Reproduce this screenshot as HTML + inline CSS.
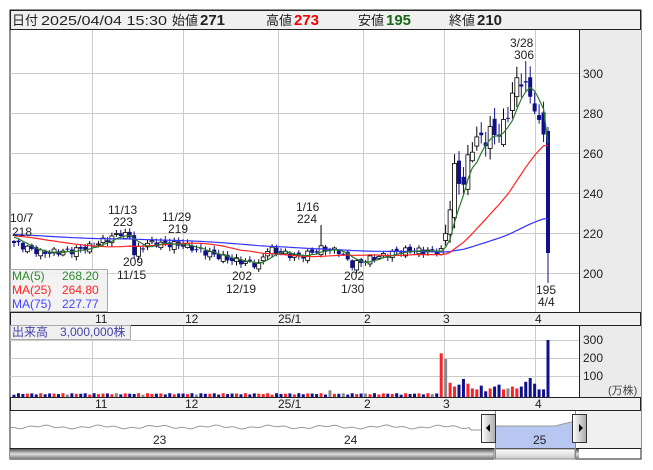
<!DOCTYPE html>
<html><head><meta charset="utf-8"><style>
html,body{margin:0;padding:0;background:#fff;width:653px;height:470px;overflow:hidden}
svg{display:block}
text{font-family:"Liberation Sans","Noto Sans CJK JP",sans-serif;font-size:12px;fill:#222}
.b{font-weight:bold;font-size:15px}
.h{font-size:13px}
</style></head><body>
<svg id="s" width="653" height="470" viewBox="0 0 653 470" xmlns="http://www.w3.org/2000/svg">
<defs>
<linearGradient id="sg" x1="0" y1="0" x2="0" y2="1"><stop offset="0" stop-color="#555"/><stop offset="0.5" stop-color="#ddd"/><stop offset="1" stop-color="#777"/></linearGradient>
<linearGradient id="tg" x1="0" y1="0" x2="0" y2="1"><stop offset="0" stop-color="#fff"/><stop offset="1" stop-color="#ccc"/></linearGradient>
<linearGradient id="hg" x1="0" y1="0" x2="1" y2="0"><stop offset="0" stop-color="#fff"/><stop offset="1" stop-color="#aaa"/></linearGradient>
</defs>
<rect x="10" y="10" width="631" height="449" fill="#fff" stroke="#222"/>
<rect x="10.5" y="10.5" width="630" height="19" fill="#f0f0f0" stroke="#222"/>
<text x="12" y="25" class="h">日付</text>
<text x="41" y="25" class="h" textLength="126" lengthAdjust="spacingAndGlyphs">2025/04/04 15:30</text>
<text x="172" y="25" class="h">始値</text>
<text x="200" y="25" class="b">271</text>
<text x="266" y="25" class="h">高値</text><text x="294" y="25" class="b" style="fill:#e00">273</text>
<text x="358" y="25" class="h">安値</text><text x="386" y="25" class="b" style="fill:#186818">195</text>
<text x="449" y="25" class="h">終値</text><text x="477" y="25" class="b">210</text>
<rect x="579" y="30" width="62" height="282" fill="#ebebeb"/>
<line x1="579.5" y1="30" x2="579.5" y2="312" stroke="#222"/>
<rect x="10.5" y="312.5" width="630" height="13" fill="#f0f0f0" stroke="#222"/>
<rect x="579" y="326" width="62" height="71" fill="#ebebeb"/>
<line x1="579.5" y1="326" x2="579.5" y2="397" stroke="#222"/>
<rect x="10.5" y="397.5" width="630" height="13" fill="#f0f0f0" stroke="#222"/>
<rect x="579" y="411" width="62" height="37" fill="#f0f0f0"/>
<line x1="10" y1="448.5" x2="641" y2="448.5" stroke="#222"/>
<rect x="10" y="449" width="569" height="10" fill="url(#sg)"/>
<rect x="494" y="449" width="81" height="10" fill="url(#tg)" stroke="#888"/>
<g id="grid"></g>
<g id="plot"></g>
<g fill="#222">
<text x="583" y="78">300</text><text x="583" y="118">280</text><text x="583" y="158">260</text><text x="583" y="198">240</text><text x="583" y="238">220</text><text x="583" y="278">200</text>
<text x="583" y="344">300</text><text x="583" y="362">200</text><text x="583" y="380">100</text>
<text x="608" y="394" style="font-size:11px;fill:#444">(万株)</text>
</g>
<g style="font-size:11px">
<text x="95" y="323">11</text><text x="185" y="323">12</text><text x="278" y="323">25/1</text><text x="364" y="323">2</text><text x="443" y="323">3</text><text x="535" y="323">4</text>
<text x="95" y="408">11</text><text x="185" y="408">12</text><text x="278" y="408">25/1</text><text x="364" y="408">2</text><text x="443" y="408">3</text><text x="535" y="408">4</text>
<text x="153" y="444">23</text><text x="344" y="444">24</text><text x="533" y="444">25</text>
</g>
<text x="10" y="222">10/7</text><text x="12" y="236">218</text>
<text x="108" y="214">11/13</text><text x="113" y="226">223</text>
<text x="162" y="221">11/29</text><text x="168" y="233">219</text>
<text x="296" y="211">1/16</text><text x="297" y="223">224</text>
<text x="123" y="266">209</text><text x="117" y="279">11/15</text>
<text x="232" y="280">202</text><text x="226" y="293">12/19</text>
<text x="344" y="280">202</text><text x="341" y="293">1/30</text>
<text x="510" y="47">3/28</text><text x="514" y="59">306</text>
<text x="536" y="294">195</text><text x="538" y="306">4/4</text>
<rect x="10.5" y="269.5" width="97" height="42" fill="#f0f0f0" fill-opacity="0.85" stroke="#aaa"/>
<text x="12" y="280" style="fill:#2e8b2e">MA(5)</text><text x="62" y="280" style="fill:#2e8b2e">268.20</text>
<text x="12" y="294" style="fill:#f22">MA(25)</text><text x="62" y="294" style="fill:#f22">264.80</text>
<text x="12" y="308" style="fill:#44f">MA(75)</text><text x="62" y="308" style="fill:#44f">227.77</text>
<rect x="10.5" y="325.5" width="120" height="14" fill="#f0f0f0" stroke="#aaa"/>
<text x="12" y="336" style="fill:#44a">出来高　3,000,000株</text>
</svg>
<script>
var NS="http://www.w3.org/2000/svg",grid=document.getElementById('grid'),plot=document.getElementById('plot');
function el(p,t,a){var e=document.createElementNS(NS,t);for(var k in a)e.setAttribute(k,a[k]);p.appendChild(e);return e;}
[92,183,278,363,444,535].forEach(function(x){el(grid,'line',{x1:x+.5,y1:30,x2:x+.5,y2:312,stroke:'#ccc'});el(grid,'line',{x1:x+.5,y1:326,x2:x+.5,y2:397,stroke:'#ccc'});});
[73,113,153,193,233,273].forEach(function(y){el(grid,'line',{x1:10,y1:y+.5,x2:579,y2:y+.5,stroke:'#ccc'});});
[340,358,376].forEach(function(y){el(grid,'line',{x1:10,y1:y+.5,x2:579,y2:y+.5,stroke:'#ccc'});});
var kp=[[0,215],[6,210],[13,211],[17,213],[24,220],[26,218],[27,210],[30,215],[38,214],[42,211],[48,207],[55,204],[57,212],[60,210],[64,208],[69,212],[73,211],[76,204],[80,207],[87,211],[96,211],[97,220],[99,250],[101,245],[103,265],[107,269],[110,272],[112,290],[114,298],[116,287],[117,285],[118,272],[119,271]];
var N=121,cl=[];
for(var i=0;i<N-1;i++){for(var j=0;j<kp.length-1;j++)if(i>=kp[j][0]&&i<=kp[j+1][0])break;var a=kp[j],b=kp[j+1]||a;var t=b[0]==a[0]?0:(i-a[0])/(b[0]-a[0]);var v=a[1]+(b[1]-a[1])*t+Math.sin(i*2.3)*1.6*(i>96?3:1);cl.push(v);}
cl.push(210);
var op=[],hi=[],lo=[];
for(i=0;i<N;i++){var o=i==0?216:cl[i-1]+Math.sin(i*1.7)*(i>96?4:1.2);if(i==N-1)o=271;op.push(o);var m=(i>96?5:1.5);hi.push(Math.max(o,cl[i])+m*Math.abs(Math.sin(i*3.1))+0.5);lo.push(Math.min(o,cl[i])-m*Math.abs(Math.cos(i*2.7))-0.5);}
hi[N-1]=273;lo[N-1]=195;hi[115]=306;hi[69]=224;
var X=function(i){return 14+i*4.45},Y=function(p){return 73+(300-p)*2};
var hist=[];for(i=0;i<75;i++)hist.push(220-i*0.02);var all=hist.concat(cl);
function ma(n,c){var pts=[];for(var i=0;i<N;i++){var s=0;for(var k=0;k<n;k++)s+=all[75+i-k];pts.push(X(i).toFixed(1)+','+Y(s/n).toFixed(1));}el(plot,'polyline',{points:pts.join(' '),fill:'none',stroke:c,'stroke-width':1.2});}
var late=[230,200,75,55,65,95,70,45,40,60,30,45,55,65,40,45,55,45,55,80,100,70,40,40,300];
for(i=0;i<N;i++){var x=X(i),up=cl[i]>=op[i],col=up?'#000':'#10108c';
el(plot,'line',{x1:x,y1:Y(hi[i]),x2:x,y2:Y(lo[i]),stroke:col});
var y1=Y(Math.max(op[i],cl[i])),y2=Y(Math.min(op[i],cl[i]));if(y2-y1<1)y2=y1+1;
el(plot,'rect',{x:x-2,y:y1,width:4,height:y2-y1,fill:up?'#fff':'#10108c',stroke:col,'stroke-width':up?0.8:0});
var vol=i<96?(12+Math.abs(Math.sin(i*1.3))*8):late[i-96];
if(i==71)vol=35;
var vc=Math.abs(cl[i]-op[i])<0.4?'#888':(up?'#f22':'#10108c');if(i==97)vc='#888';if(i==96)vc='#f22';if(i==N-1)vc='#10108c';
el(plot,'rect',{x:x-1.5,y:397-vol*0.19,width:3,height:vol*0.19,fill:vc});}
ma(75,'#33f');ma(25,'#f22');ma(5,'#2a7a2a');
var np=[];for(var x=11;x<=578;x+=2){var y=427+Math.sin(x*0.11)*1.2+Math.sin(x*0.37)*0.8;if(x>470&&x<490)y=430;if(x>495)y=426-(x>555?(x-555)*0.25:0);np.push(x+','+y.toFixed(1));}
el(plot,'polygon',{points:'495,448 '+np.filter(function(p){return +p.split(',')[0]>=495}).join(' ')+' 575,448',fill:'#b8c6f2'});
el(plot,'polyline',{points:np.join(' '),fill:'none',stroke:'#999'});
el(plot,'line',{x1:495.5,y1:411,x2:495.5,y2:459,stroke:'#3ac'});el(plot,'line',{x1:575.5,y1:411,x2:575.5,y2:459,stroke:'#3ac'});
[[481,'M490,424 l-4,4 4,4z'],[572,'M579,424 l4,4 -4,4z']].forEach(function(h){el(plot,'rect',{x:h[0]+.5,y:414.5,width:14,height:28,fill:'url(#hg)',stroke:'#333'});el(plot,'path',{d:h[1],fill:'#000'});});
</script>
</body></html>
